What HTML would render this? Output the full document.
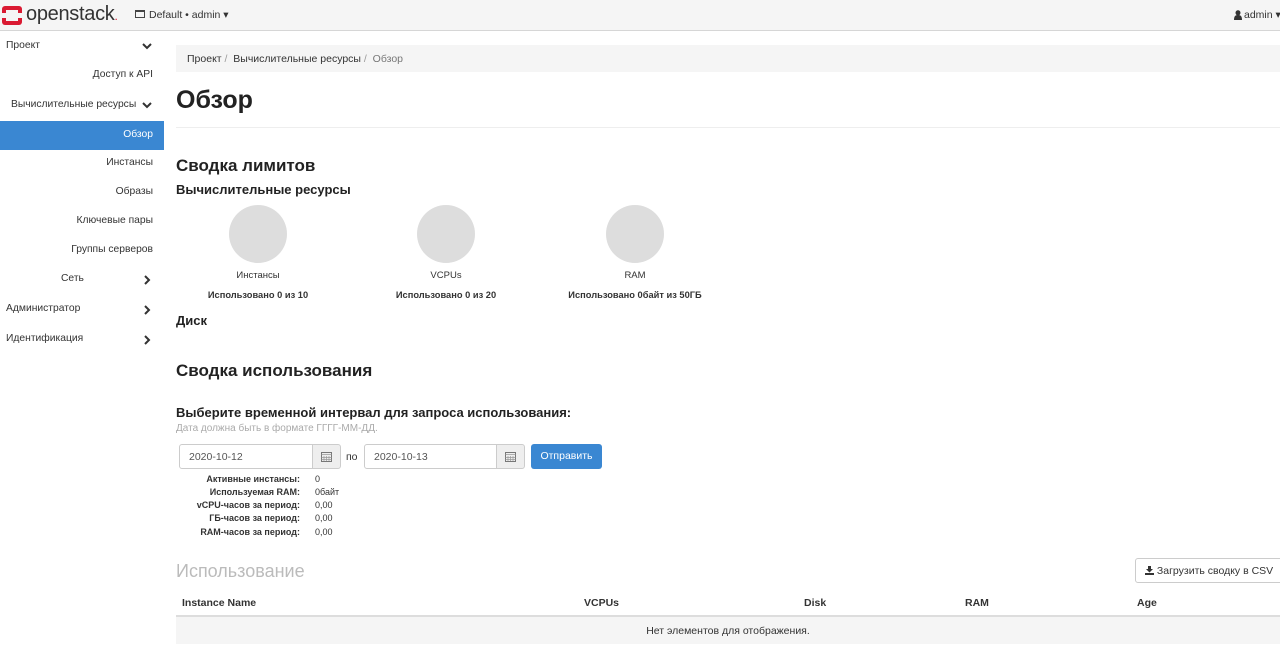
<!DOCTYPE html>
<html><head><meta charset="utf-8">
<style>
*{box-sizing:border-box;margin:0;padding:0}
body{width:1280px;height:657px;overflow:hidden;background:#fff;font-family:"Liberation Sans",Arial,sans-serif;color:#333;font-size:11px;position:relative}
.top{position:absolute;left:0;top:0;width:1280px;height:31px;background:#f5f5f5;border-bottom:1px solid #d6d6d6}
.abs{position:absolute;white-space:nowrap}
.si{position:absolute;white-space:nowrap;font-size:10.3px;color:#333}
.chev{position:absolute;left:141px;width:12px;height:12px}
.h1{font-size:25px;color:#222;font-weight:bold}
.h3{font-size:17px;color:#222;font-weight:bold}
.h4{font-size:13px;font-weight:bold;color:#222}
.circ{position:absolute;width:58px;height:58px;border-radius:50%;background:#ddd}
.inp{position:absolute;height:25px;border:1px solid #ccc;border-radius:3px;background:#fff;font-size:10.5px;color:#555;padding:6px 9px}
.addon{position:absolute;height:25px;border:1px solid #ccc;background:#eee;border-radius:0 3px 3px 0}
.lbl{position:absolute;width:300px;text-align:right;left:0;font-weight:bold;font-size:9px;color:#333}
.val{position:absolute;left:315px;font-size:9px;color:#333}
</style></head><body>
<div class="top">
  <svg class="abs" style="left:2px;top:6px" width="20" height="19" viewBox="0 0 20 19"><rect x="0" y="0" width="20" height="19" rx="3" fill="#da1a32"/><rect x="4" y="4" width="12" height="11" fill="#f5f5f5"/><rect x="0" y="7" width="5" height="5" fill="#f5f5f5"/><rect x="15" y="7" width="5" height="5" fill="#f5f5f5"/></svg>
  <div class="abs" style="left:26px;top:3px;font-size:20px;color:#333;letter-spacing:-0.3px">openstack<span style="color:#da1a32;font-size:12px">.</span></div>
  <div class="abs" style="left:135px;top:10px;width:10px;height:8px;border:1px solid #444;border-top-width:2px"></div>
  <div class="abs" style="left:149px;top:9px;font-size:10.5px">Default • admin ▾</div>
  <svg class="abs" style="left:1234px;top:10px" width="8" height="10" viewBox="0 0 8 10"><circle cx="4" cy="2.8" r="2.5" fill="#333"/><path d="M0 10c0-4 1.5-5 4-5s4 1 4 5z" fill="#333"/></svg>
  <div class="abs" style="left:1244px;top:9px;font-size:10.5px">admin ▾</div>
</div>
<div class="si" style="left:6px;top:40px">Проект</div>
<svg class="chev" style="top:40px" viewBox="0 0 12 12"><path d="M2 4l4 4 4-4" stroke="#333" stroke-width="2" fill="none"/></svg>
<div class="si" style="right:1127px;top:69px">Доступ к API</div>
<div class="si" style="left:11px;top:99px">Вычислительные ресурсы</div>
<svg class="chev" style="top:99px" viewBox="0 0 12 12"><path d="M2 4l4 4 4-4" stroke="#333" stroke-width="2" fill="none"/></svg>
<div class="abs" style="left:0;top:121px;width:164px;height:29px;background:#3a87d2"></div>
<div class="si" style="right:1127px;top:129px;color:#fff">Обзор</div>
<div class="si" style="right:1127px;top:157px">Инстансы</div>
<div class="si" style="right:1127px;top:186px">Образы</div>
<div class="si" style="right:1127px;top:215px">Ключевые пары</div>
<div class="si" style="right:1127px;top:244px">Группы серверов</div>
<div class="si" style="left:61px;top:273px">Сеть</div>
<svg class="chev" style="top:274px" viewBox="0 0 12 12"><path d="M4 2l4 4-4 4" stroke="#333" stroke-width="2" fill="none"/></svg>
<div class="si" style="left:6px;top:303px">Администратор</div>
<svg class="chev" style="top:304px" viewBox="0 0 12 12"><path d="M4 2l4 4-4 4" stroke="#333" stroke-width="2" fill="none"/></svg>
<div class="si" style="left:6px;top:333px">Идентификация</div>
<svg class="chev" style="top:334px" viewBox="0 0 12 12"><path d="M4 2l4 4-4 4" stroke="#333" stroke-width="2" fill="none"/></svg>

<div class="abs" style="left:176px;top:45px;width:1104px;height:27px;background:#f5f5f5"></div>
<div class="abs" style="left:187px;top:53px;font-size:10.5px">Проект <span style="color:#999">/</span>&nbsp; Вычислительные ресурсы <span style="color:#999">/</span>&nbsp; <span style="color:#777">Обзор</span></div>
<div class="abs h1" style="left:176px;top:86px">Обзор</div>
<div class="abs" style="left:176px;top:127px;width:1104px;height:1px;background:#eee"></div>
<div class="abs h3" style="left:176px;top:156px">Сводка лимитов</div>
<div class="abs h4" style="left:176px;top:182px">Вычислительные ресурсы</div>
<div class="circ" style="left:229px;top:205px"></div>
<div class="circ" style="left:417px;top:205px"></div>
<div class="circ" style="left:606px;top:205px"></div>
<div class="abs" style="left:158px;width:200px;text-align:center;top:270px;font-size:9.5px">Инстансы</div>
<div class="abs" style="left:346px;width:200px;text-align:center;top:270px;font-size:9.5px">VCPUs</div>
<div class="abs" style="left:535px;width:200px;text-align:center;top:270px;font-size:9.5px">RAM</div>
<div class="abs" style="left:158px;width:200px;text-align:center;top:290px;font-size:9.3px;font-weight:bold">Использовано 0 из 10</div>
<div class="abs" style="left:346px;width:200px;text-align:center;top:290px;font-size:9.3px;font-weight:bold">Использовано 0 из 20</div>
<div class="abs" style="left:535px;width:200px;text-align:center;top:290px;font-size:9.3px;font-weight:bold">Использовано 0байт из 50ГБ</div>
<div class="abs h4" style="left:176px;top:313px">Диск</div>
<div class="abs h3" style="left:176px;top:361px">Сводка использования</div>
<div class="abs h4" style="left:176px;top:405px">Выберите временной интервал для запроса использования:</div>
<div class="abs" style="left:176px;top:423px;font-size:10px;color:#aaa">Дата должна быть в формате ГГГГ-ММ-ДД.</div>
<div class="inp" style="left:179px;top:444px;width:134px;border-radius:3px 0 0 3px">2020-10-12</div>
<div class="addon" style="left:312px;top:444px;width:29px"></div>
<div class="abs" style="left:346px;top:451px;font-size:10.5px">по</div>
<div class="inp" style="left:364px;top:444px;width:133px;border-radius:3px 0 0 3px">2020-10-13</div>
<div class="addon" style="left:496px;top:444px;width:29px"></div>
<svg class="abs" style="left:321px;top:451px" width="11" height="11" viewBox="0 0 11 11"><rect x="0.5" y="1.5" width="10" height="9" fill="none" stroke="#777"/><path d="M0.5 3.5h10M3 5v5M5.5 5v5M8 5v5M0.5 6.5h10M0.5 8.5h10" stroke="#999" stroke-width="0.7"/></svg>
<svg class="abs" style="left:505px;top:451px" width="11" height="11" viewBox="0 0 11 11"><rect x="0.5" y="1.5" width="10" height="9" fill="none" stroke="#777"/><path d="M0.5 3.5h10M3 5v5M5.5 5v5M8 5v5M0.5 6.5h10M0.5 8.5h10" stroke="#999" stroke-width="0.7"/></svg>
<div class="abs" style="left:531px;top:444px;width:71px;height:25px;background:#3a87d2;border-radius:3px;color:#fff;font-size:10.5px;text-align:center;line-height:25px">Отправить</div>
<div class="lbl" style="top:474px">Активные инстансы:</div><div class="val" style="top:474px">0</div>
<div class="lbl" style="top:487px">Используемая RAM:</div><div class="val" style="top:487px">0байт</div>
<div class="lbl" style="top:500px">vCPU-часов за период:</div><div class="val" style="top:500px">0,00</div>
<div class="lbl" style="top:513px">ГБ-часов за период:</div><div class="val" style="top:513px">0,00</div>
<div class="lbl" style="top:527px">RAM-часов за период:</div><div class="val" style="top:527px">0,00</div>
<div class="abs" style="left:176px;top:561px;font-size:18px;color:#bbb">Использование</div>
<div class="abs" style="left:1135px;top:558px;width:150px;height:25px;border:1px solid #ccc;border-radius:3px;background:#fff;font-size:10.5px;padding:6px 9px"><svg width="9" height="9" viewBox="0 0 9 9" style="vertical-align:-1px"><path d="M3 0h3v3h2L4.5 6.5 1 3h2z" fill="#333"/><rect x="0" y="7" width="9" height="2" fill="#333"/></svg> Загрузить сводку в CSV</div>
<div class="abs" style="left:182px;top:597px;font-size:10.5px;font-weight:bold">Instance Name</div>
<div class="abs" style="left:584px;top:597px;font-size:10.5px;font-weight:bold">VCPUs</div>
<div class="abs" style="left:804px;top:597px;font-size:10.5px;font-weight:bold">Disk</div>
<div class="abs" style="left:965px;top:597px;font-size:10.5px;font-weight:bold">RAM</div>
<div class="abs" style="left:1137px;top:597px;font-size:10.5px;font-weight:bold">Age</div>
<div class="abs" style="left:176px;top:615px;width:1104px;height:2px;background:#ddd"></div>
<div class="abs" style="left:176px;top:617px;width:1104px;height:27px;background:#f5f5f5"></div>
<div class="abs" style="left:176px;width:1104px;text-align:center;top:625px;font-size:10.5px">Нет элементов для отображения.</div>
</body></html>
